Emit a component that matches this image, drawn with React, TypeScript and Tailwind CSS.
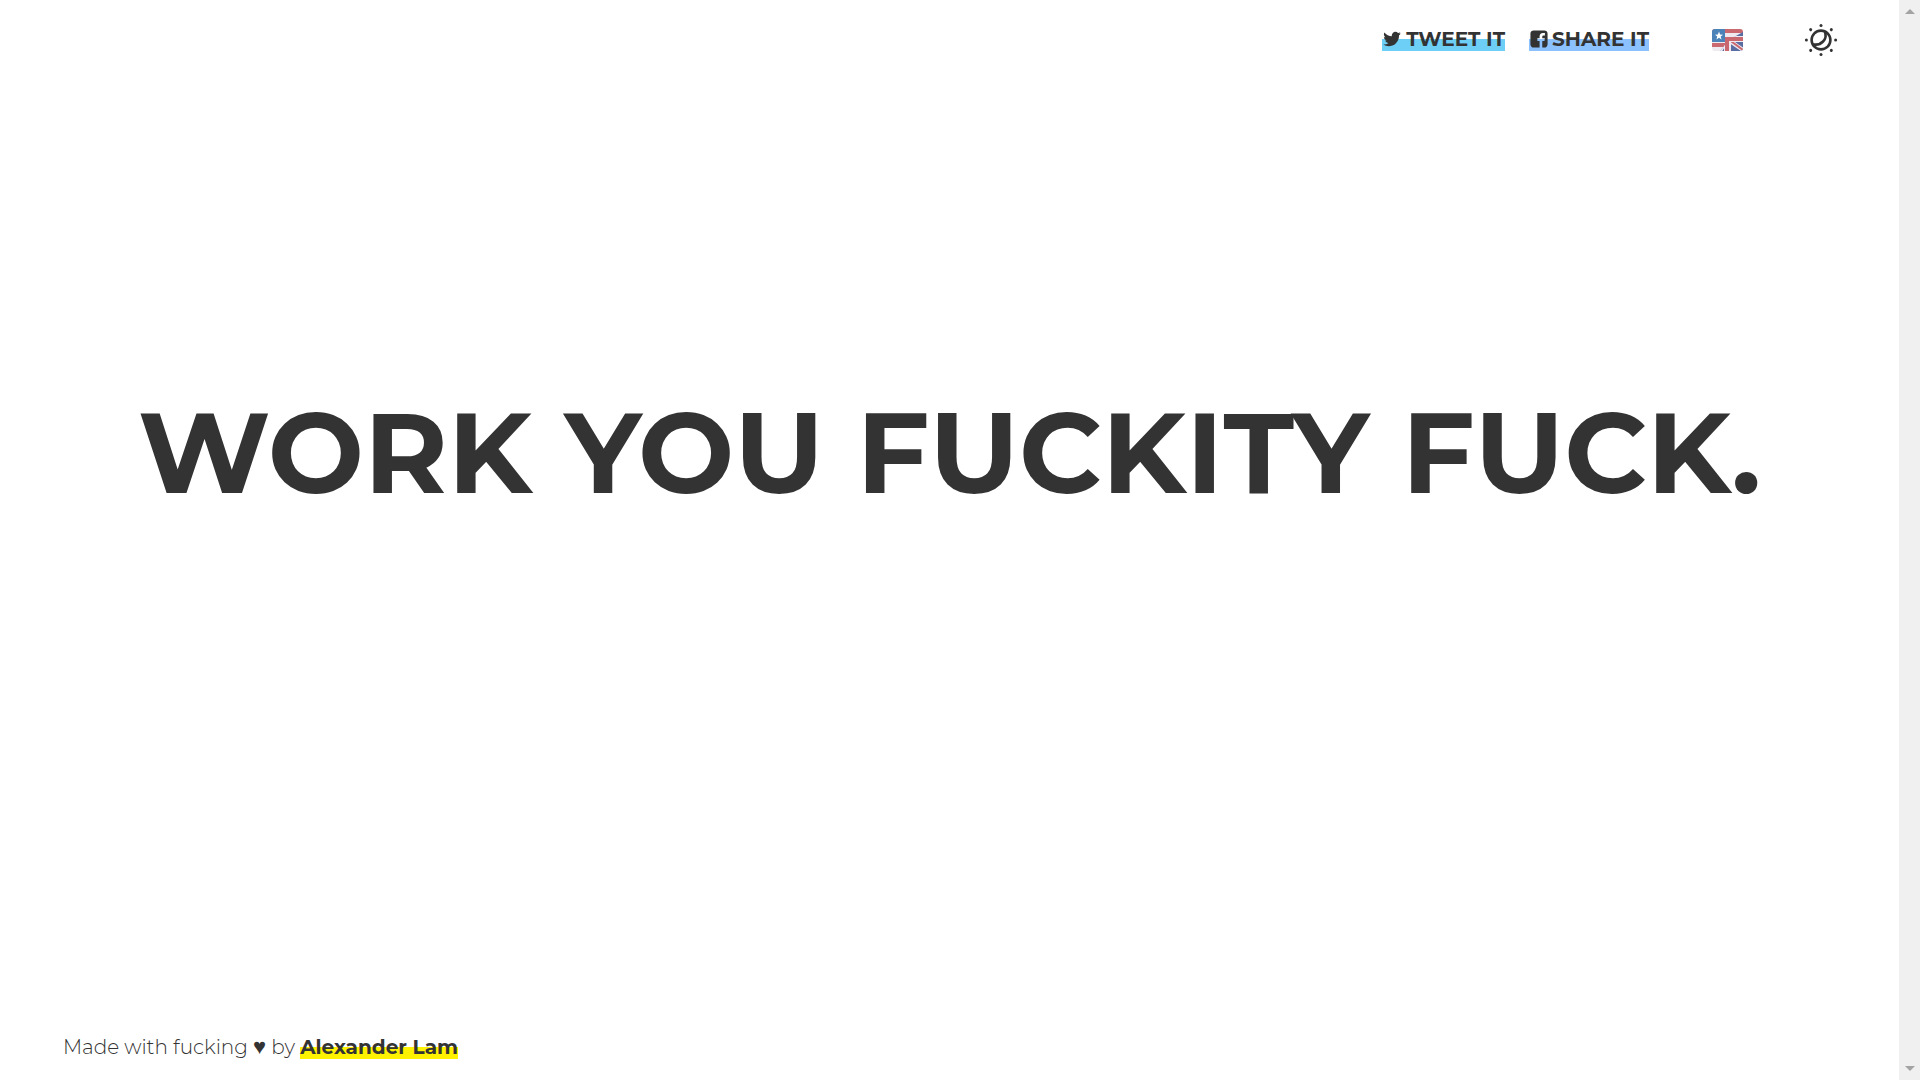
function TwitterIcon() {
  return (
    <svg width="20" height="20" viewBox="0 0 1792 1792" fill="currentColor" aria-hidden="true">
      <path d="M1684 408q-67 98-162 167 1 14 1 42 0 130-38 259.5t-115.5 248.5-184.5 210.5-258 146-323 54.5q-271 0-496-145 35 4 78 4 225 0 401-138-105-2-188-64.5t-114-159.5q33 5 61 5 43 0 85-11-112-23-185.5-111.5t-73.5-205.5v-4q68 38 146 41-66-44-105-115t-39-154q0-88 44-163 121 149 294.5 238.5t371.5 99.5q-8-38-8-74 0-134 94.5-228.5t228.5-94.5q140 0 236 102 109-21 205-78-37 115-142 178 93-10 186-50z" />
    </svg>
  );
}

function FacebookIcon() {
  return (
    <svg width="20" height="20" viewBox="0 0 1792 1792" fill="currentColor" aria-hidden="true">
      <path d="M1376 128q119 0 203.5 84.5t84.5 203.5v960q0 119-84.5 203.5t-203.5 84.5h-188v-595h199l30-232h-229v-148q0-56 23.5-84t91.5-28l122-1v-207q-63-9-178-9-136 0-217.5 80t-81.5 226v171h-200v232h200v595h-532q-119 0-203.5-84.5t-84.5-203.5v-960q0-119 84.5-203.5t203.5-84.5h960z" />
    </svg>
  );
}

function FlagIcon() {
  return (
    <svg width="31" height="22" viewBox="0 0 31 22" aria-hidden="true">
      <defs>
        <clipPath id="flag-shape">
          <rect width="31" height="22" rx="3" />
        </clipPath>
        <clipPath id="flag-uk">
          <path d="M31 3V22H8L13 16V12H13V8H22Z" />
        </clipPath>
      </defs>
      <g clipPath="url(#flag-shape)">
        <rect width="31" height="22" fill="#eeeaf0" />
        <path d="M0 0H31V4H0ZM0 14H14V18H0Z" fill="#c9686f" />
        <g clipPath="url(#flag-uk)">
          <rect width="31" height="22" fill="#596da3" />
          <path d="M15 10L31 21M15 10L8 22" stroke="#eeeaf0" strokeWidth="4" />
          <path d="M16 10L31 21" stroke="#c9686f" strokeWidth="2" />
          <path d="M12 7H31V13H12ZM12 7H19V22H12Z" fill="#eeeaf0" />
          <path d="M12 8H31V12H12ZM13 8H17V22H13Z" fill="#c9686f" />
        </g>
        <rect width="13" height="13" fill="#4b83b8" />
        <path d="M7 2.6L8.1 5.6L11 5.7L8.7 7.5L9.6 10.4L7 8.7L4.4 10.4L5.3 7.5L3 5.7L5.9 5.6Z" fill="#fff" />
      </g>
    </svg>
  );
}

const rays = [0, 45, 90, 135, 180, 225, 270, 315];

function DayNightIcon() {
  return (
    <svg width="34" height="34" viewBox="-17 -17 34 34" fill="none" stroke="#333" strokeWidth="2.6" aria-hidden="true">
      <circle r="9.4" />
      <path d="M3.8 -8.6C7 -1 0 6.5 -8.6 4.2" />
      {rays.map((a) => (
        <circle key={a} cx="0" cy="-14.6" r="1.5" fill="#333" stroke="none" transform={`rotate(${a})`} />
      ))}
    </svg>
  );
}

export default function App() {
  return (
    <div className="flex min-h-screen bg-white font-['Montserrat','Inter',sans-serif] text-[#333]">
      <div className="flex min-w-0 flex-1 flex-col">
        <header className="flex h-20 items-center justify-end pr-[61px]">
          <nav className="flex gap-6 pb-0.5 text-xl leading-6 font-bold">
            <a href="#tweet" className="flex items-center gap-1 bg-linear-to-b from-transparent from-50% to-[#6ecff6] to-50%">
              <TwitterIcon />
              TWEET IT
            </a>
            <a href="#share" className="flex items-center gap-[3px] bg-linear-to-b from-transparent from-50% to-[#8bc1ff] to-50%">
              <FacebookIcon />
              SHARE IT
            </a>
          </nav>
          <button type="button" aria-label="Language" className="ml-[63px]">
            <FlagIcon />
          </button>
          <button type="button" aria-label="Toggle night mode" className="ml-[61px]">
            <DayNightIcon />
          </button>
        </header>
        <main className="flex flex-1 items-start justify-center pt-[303px]">
          <h1 className="text-[114px] leading-[140px] font-bold whitespace-nowrap">WORK YOU FUCKITY FUCK.</h1>
        </main>
        <footer className="flex h-[66px] items-center px-[63px] text-xl">
          <p className="font-light">
            Made with fucking <span className="font-['DejaVu_Sans'] text-[22px] leading-6">♥</span> by{" "}
            <a href="#author" className="bg-linear-to-b from-transparent from-50% to-[#fff200] to-50% font-bold">
              Alexander Lam
            </a>
          </p>
        </footer>
      </div>
      <div className="flex w-[21px] flex-col items-center justify-between bg-[#f0f0f0] py-[9px]" aria-hidden="true">
        <svg width="10" height="5" viewBox="0 0 10 5" fill="#a3a3a3"><path d="M0 5L5 0L10 5Z" /></svg>
        <svg width="10" height="5" viewBox="0 0 10 5" fill="#a3a3a3"><path d="M0 0L5 5L10 0Z" /></svg>
      </div>
    </div>
  );
}
